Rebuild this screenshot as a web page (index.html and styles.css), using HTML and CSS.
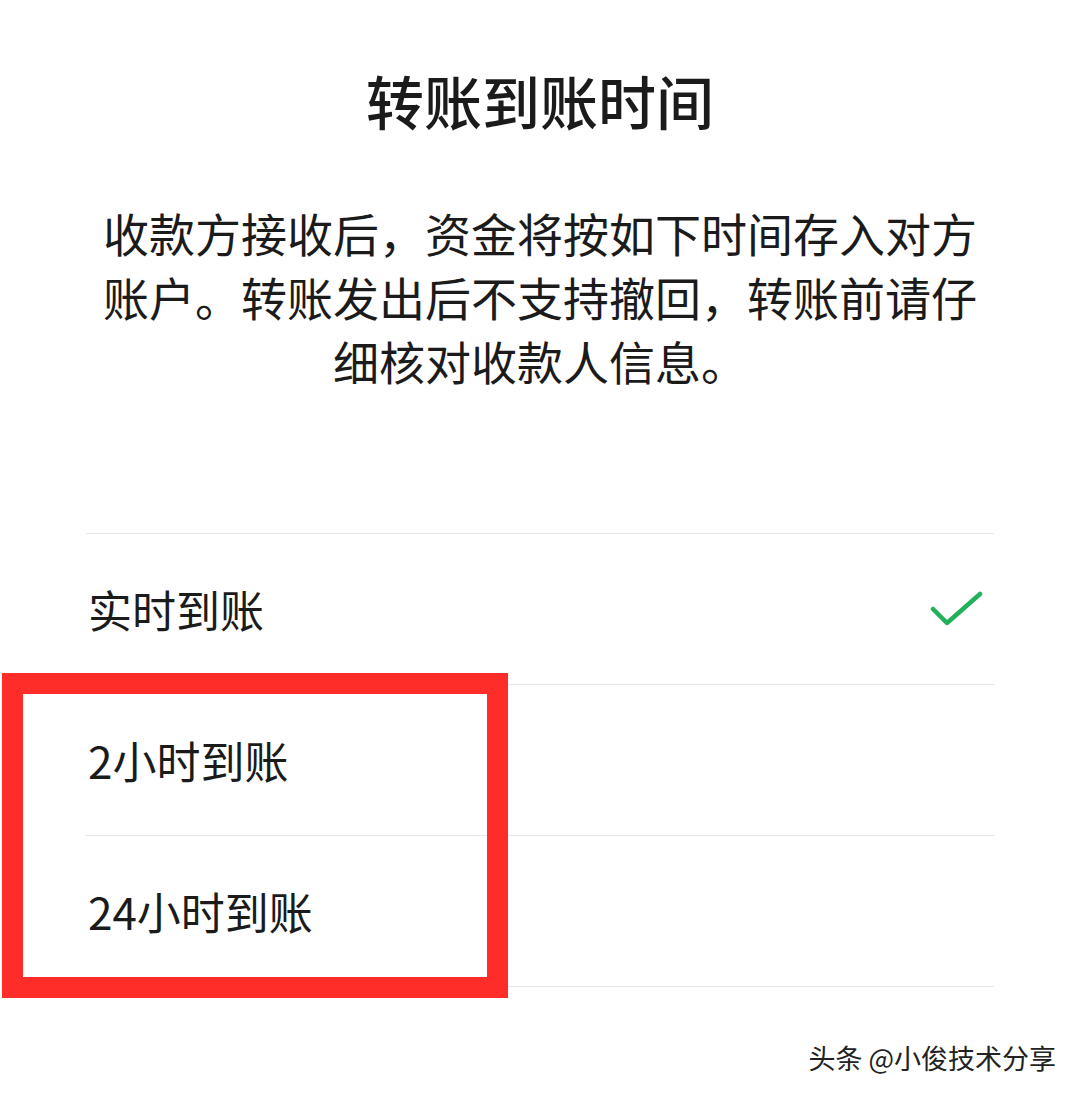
FILE: index.html
```html
<!DOCTYPE html>
<html lang="zh-CN">
<head>
    <meta charset="UTF-8">
    <meta name="viewport" content="width=device-width, initial-scale=1.0">
    <title>转账到账时间</title>
    <link rel="stylesheet" href="styles.css">
</head>
<body>

<div class="page">
    <h1 class="title">转账到账时间</h1>
    <p class="desc">收款方接收后，资金将按如下时间存入对方账户。转账发出后不支持撤回，转账前请仔细核对收款人信息。</p>

    <ul class="options">
        <li class="option">
            <span>实时到账</span>
            <svg class="check" width="54" height="38" viewBox="0 0 54 38">
                <path d="M3 18 L17 32 L50 3" fill="none" stroke="#22b15b" stroke-width="4.5" stroke-linecap="round" stroke-linejoin="round"/>
            </svg>
        </li>
        <li class="option"><span>2小时到账</span></li>
        <li class="option"><span>24小时到账</span></li>
    </ul>

    <!-- red highlight drawn over the list -->
    <div class="highlight"></div>

    <div class="watermark">头条 @小俊技术分享</div>
</div>

</body>
</html>
```

FILE: styles.css
```css
body {
    margin: 0;
    padding: 0;
    background: #ffffff;
    font-family: "Noto Sans CJK SC", "Noto Sans", sans-serif;
    color: #1b1b1b;
}
.page {
    position: relative;
    width: 1080px;
    height: 1099px;
    overflow: hidden;
}
.title {
    margin: 0;
    padding-top: 60px;
    font-size: 58px;
    font-weight: 500;
    line-height: 80px;
    text-align: center;
    letter-spacing: 0;
}
.desc {
    width: 880px;
    margin: 60px auto 0;
    font-size: 46px;
    line-height: 64px;
    text-align: center;
}
.options {
    list-style: none;
    margin: 141px 86px 0;
    padding: 0;
    border-top: 1px solid #e6e6e6;
}
.option {
    display: flex;
    align-items: center;
    justify-content: space-between;
    height: 150px;
    border-bottom: 1px solid #e6e6e6;
    padding-left: 2px;
    font-size: 44px;
}
.check {
    margin-right: 10px;
    margin-top: 2px;
}
.highlight {
    position: absolute;
    left: 2px;
    top: 673px;
    width: 464px;
    height: 283px;
    border: 21px solid #fe2d2a;
}
.watermark {
    position: absolute;
    right: 24px;
    bottom: 22px;
    font-size: 27px;
    color: #222;
    text-shadow: 0 0 2px #fff, 0 0 2px #fff;
}
```
